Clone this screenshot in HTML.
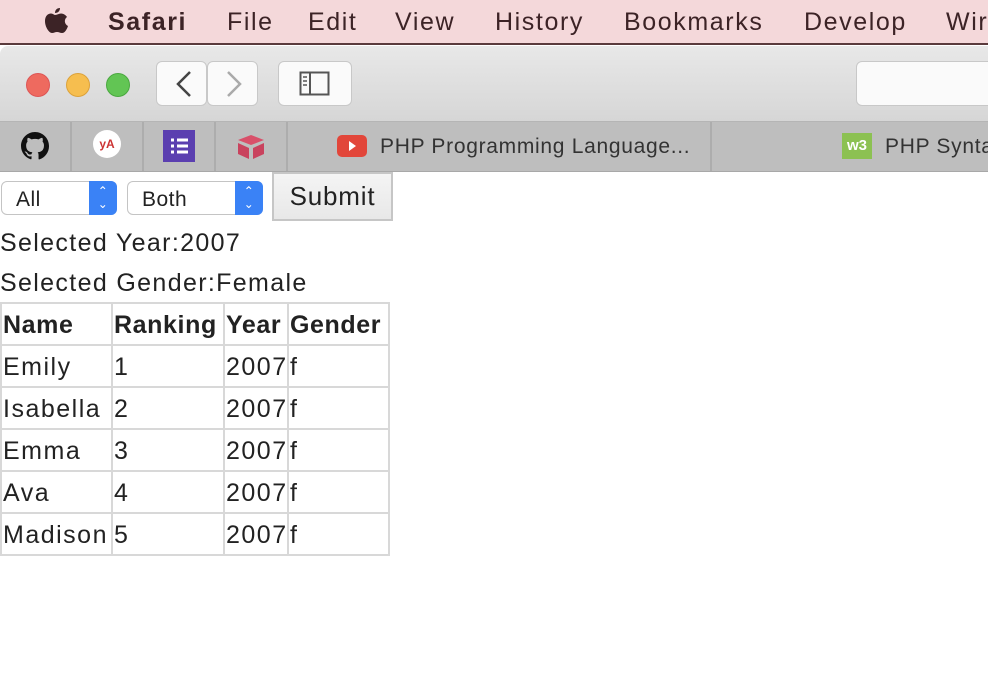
<!DOCTYPE html>
<html><head><style>
*{margin:0;padding:0;box-sizing:border-box}
body{width:988px;height:688px;overflow:hidden;background:#fff;font-family:"Liberation Sans",sans-serif;position:relative;color:#222}
.menu{position:absolute;top:0;left:0;width:988px;height:45px;background:#f4d8da;border-bottom:2px solid #5a3a3c;color:#3c2326;font-size:25px;letter-spacing:1.6px}
.menu span{position:absolute;top:8px}
.tb{position:absolute;top:46px;left:0;width:988px;height:76px;background:linear-gradient(#e8e8e8,#d6d6d6);border-bottom:1px solid #b5b5b5;border-top-left-radius:8px}
.dot{position:absolute;top:73px;width:24px;height:24px;border-radius:50%}
.btn{position:absolute;background:#fafafa;border:1px solid #c8c8c8;border-radius:6px}
.tabs{position:absolute;top:122px;left:0;width:988px;height:50px;background:#bebebe;border-bottom:1px solid #a8a8a8}
.sep{position:absolute;top:122px;width:2px;height:49px;background:#adadad}
.tabs span{position:absolute;top:13px;font-size:21px;color:#333;letter-spacing:0.7px;white-space:nowrap}
.sel{position:absolute;top:181px;height:34px;border:1px solid #c4c4c4;border-radius:6px;background:#fff;font-size:21px;padding:6px 14px;letter-spacing:0.5px}
.arr{position:absolute;right:-1px;top:-1px;width:28px;height:34px;background:#3a82f6;border-radius:0 6px 6px 0;color:#fff;font-size:12px;text-align:center;line-height:13px;padding-top:4px}
table{position:absolute;top:302px;left:0;border-collapse:collapse;font-size:25px;letter-spacing:1.5px;table-layout:fixed;width:388px}
td,th{border:2px solid #d8d8d8;height:42px;padding:3px 1px 0 1px;text-align:left;white-space:nowrap;overflow:hidden}
th{font-weight:bold;letter-spacing:0.6px}
.lbl{position:absolute;left:0;font-size:25px;letter-spacing:1.35px}
</style></head><body>
<div class="menu">
<svg style="position:absolute;left:41px;top:6px" width="28" height="32" viewBox="0 0 28 32"><path d="M19 2c0 3-2 5-5 5 0-3 2-5 5-5zM14 9c2 0 4-1.5 6-1.5 3 0 5 2 6 3.5-3 2-3 7 1 9-1 3-3 7-6 7-2 0-3-1-5-1s-3 1-5 1c-3 0-7-6-7-12 0-5 3-7.5 6-7.5 2 0 3 1.5 4 1.5z" fill="#3c2326"/></svg>
<span style="left:108px;font-weight:bold">Safari</span><span style="left:227px">File</span><span style="left:308px">Edit</span><span style="left:395px">View</span><span style="left:495px">History</span><span style="left:624px">Bookmarks</span><span style="left:804px">Develop</span><span style="left:946px">Wir</span>
</div>
<div class="tb"></div>
<div class="dot" style="left:26px;background:#ee6a5f;border:1px solid #d55"></div>
<div class="dot" style="left:66px;background:#f6be4f;border:1px solid #dca23a"></div>
<div class="dot" style="left:106px;background:#62c554;border:1px solid #4aa83f"></div>
<div class="btn" style="left:156px;top:61px;width:51px;height:45px"></div>
<div class="btn" style="left:207px;top:61px;width:51px;height:45px"></div>
<svg style="position:absolute;left:170px;top:70px" width="80" height="28"><path d="M20 2L8 14l12 12" stroke="#444" stroke-width="2.5" fill="none"/><path d="M58 2l12 12-12 12" stroke="#aaa" stroke-width="2.5" fill="none"/></svg>
<div class="btn" style="left:278px;top:61px;width:74px;height:45px"></div>
<svg style="position:absolute;left:299px;top:71px" width="32" height="26"><rect x="1.5" y="1.5" width="28" height="22" stroke="#555" stroke-width="2" fill="none"/><line x1="11" y1="1" x2="11" y2="24" stroke="#555" stroke-width="2"/><path d="M4 6h4M4 10h4M4 14h4" stroke="#555" stroke-width="1.5"/></svg>
<div class="btn" style="left:856px;top:61px;width:140px;height:45px"></div>
<div class="tabs"><span style="left:380px">PHP Programming Language...</span><span style="left:885px">PHP Synta</span></div>
<div class="sep" style="left:70px"></div><div class="sep" style="left:142px"></div><div class="sep" style="left:214px"></div><div class="sep" style="left:286px"></div><div class="sep" style="left:710px"></div>
<svg style="position:absolute;left:21px;top:132px" width="28" height="28" viewBox="0 0 16 16"><path fill="#111" d="M8 0C3.58 0 0 3.58 0 8c0 3.54 2.29 6.53 5.47 7.59.4.07.55-.17.55-.38v-1.33c-2.23.48-2.7-1.07-2.7-1.07-.36-.92-.89-1.17-.89-1.17-.73-.5.06-.49.06-.49.8.06 1.23.83 1.23.83.72 1.23 1.88.87 2.34.67.07-.52.28-.87.51-1.07-1.78-.2-3.64-.89-3.64-3.95 0-.87.31-1.59.82-2.15-.08-.2-.36-1.02.08-2.12 0 0 .67-.21 2.2.82a7.6 7.6 0 0 1 4 0c1.53-1.04 2.2-.82 2.2-.82.44 1.1.16 1.92.08 2.12.51.56.82 1.27.82 2.15 0 3.07-1.87 3.75-3.65 3.95.29.25.54.73.54 1.48v2.2c0 .21.15.46.55.38A8 8 0 0 0 16 8c0-4.42-3.58-8-8-8z"/></svg>
<div style="position:absolute;left:93px;top:130px;width:28px;height:28px;border-radius:50%;background:#fff;color:#c33;font-size:12px;font-weight:bold;text-align:center;line-height:28px">yA</div>
<div style="position:absolute;left:163px;top:130px;width:32px;height:32px;background:#5b3fb0"><svg width="32" height="32"><path d="M8 10h3M14 10h11M8 16h3M14 16h11M8 22h3M14 22h11" stroke="#fff" stroke-width="3"/></svg></div>
<svg style="position:absolute;left:236px;top:134px" width="30" height="26"><path d="M15 1l13 5-13 5-13-5z" fill="#d9506a"/><path d="M2 9l11 5v11L2 20z" fill="#c9435e"/><path d="M17 14l11-5v11l-11 5z" fill="#c9435e"/></svg>
<div style="position:absolute;left:337px;top:135px;width:30px;height:22px;background:#e2463a;border-radius:5px"><svg width="30" height="22"><path d="M12 6l7 5-7 5z" fill="#fff"/></svg></div>
<div style="position:absolute;left:842px;top:133px;width:30px;height:26px;background:#8cc152;color:#fff;font-size:15px;font-weight:bold;text-align:center;line-height:26px">w3</div>
<div class="sel" style="left:1px;width:116px">All<div class="arr">&#8963;<br>&#8964;</div></div>
<div class="sel" style="left:127px;width:136px">Both<div class="arr">&#8963;<br>&#8964;</div></div>
<div style="position:absolute;left:272px;top:172px;width:121px;height:49px;border:2px solid #c6c6c6;background:linear-gradient(#f4f4f4,#e8e8e8);font-size:26px;text-align:center;line-height:45px;color:#222;letter-spacing:0.8px">Submit</div>
<div class="lbl" style="top:229px">Selected Year:2007</div>
<div class="lbl" style="top:269px">Selected Gender:Female</div>
<table>
<colgroup><col style="width:111px"><col style="width:112px"><col style="width:64px"><col style="width:101px"></colgroup>
<tr><th>Name</th><th>Ranking</th><th>Year</th><th>Gender</th></tr>
<tr><td>Emily</td><td>1</td><td>2007</td><td>f</td></tr>
<tr><td>Isabella</td><td>2</td><td>2007</td><td>f</td></tr>
<tr><td>Emma</td><td>3</td><td>2007</td><td>f</td></tr>
<tr><td>Ava</td><td>4</td><td>2007</td><td>f</td></tr>
<tr><td>Madison</td><td>5</td><td>2007</td><td>f</td></tr>
</table>
</body></html>
